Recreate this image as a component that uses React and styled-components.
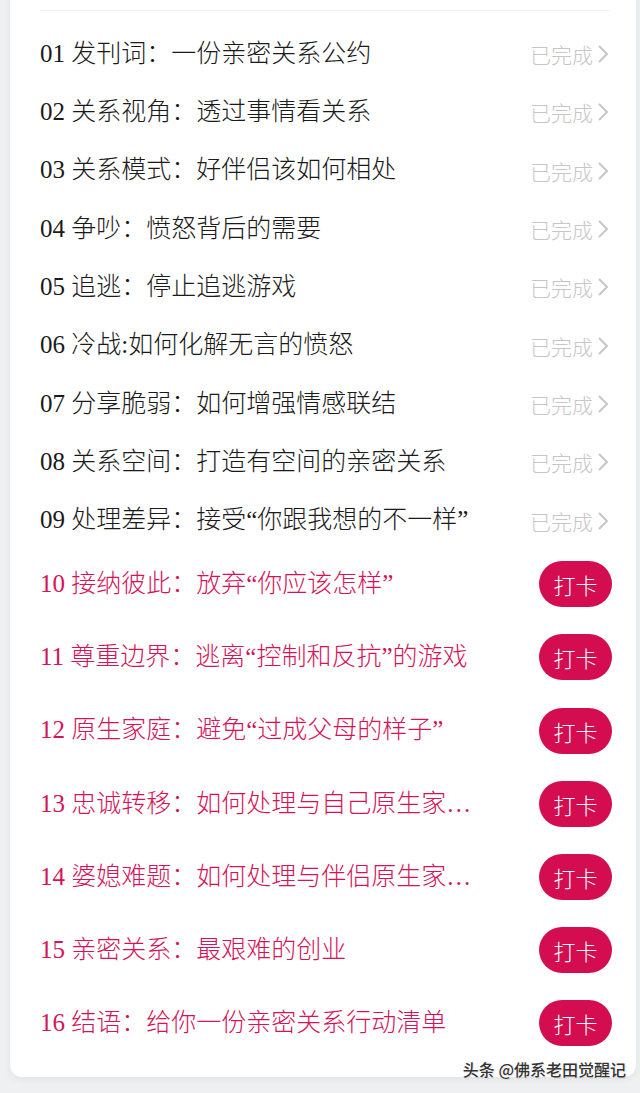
import React from "react";
import styled, { createGlobalStyle } from "styled-components";

const GlobalStyle = createGlobalStyle`
  html, body {
    margin: 0;
    padding: 0;
    background: #eff0f2;
  }
  body {
    font-family: "Liberation Serif", "Noto Sans CJK SC", serif;
  }
`;

const Page = styled.div`
  position: relative;
  width: 640px;
  height: 1093px;
  overflow: hidden;
  padding: 0 4px 0 10px;
  box-sizing: border-box;
`;

const Card = styled.div`
  background: #fff;
  border-radius: 0 0 12px 12px;
  box-shadow: 0 2px 8px rgba(0, 0, 0, 0.06);
  padding: 30px 24px 15px 30px;
  margin-top: -20px;
`;

const Divider = styled.div`
  height: 1px;
  background: #efefef;
  margin: 0 3px 14px 0;
`;

const List = styled.ul`
  list-style: none;
  margin: 0;
  padding: 0;
`;

const Row = styled.li`
  display: flex;
  align-items: center;
  box-sizing: border-box;
  height: ${(p) => (p.$done ? "58.3px" : "73.2px")};
  padding-bottom: ${(p) => (p.$done ? "0" : "4px")};
`;

const Title = styled.div`
  flex: 1;
  min-width: 0;
  max-width: 440px;
  font-size: 25px;
  font-weight: 300;
  color: ${(p) => (p.$done ? "#1a1a1a" : "#d4145a")};
  white-space: nowrap;
  overflow: hidden;
  text-overflow: ellipsis;
  line-height: 1.3;
`;

const Status = styled.div`
  margin-left: auto;
  display: flex;
  align-items: center;
  gap: 4px;
  font-family: "Noto Sans CJK SC", sans-serif;
  font-size: 21px;
  font-weight: 300;
  color: #c6c6c6;
  margin-right: 3px;
`;

const PunchButton = styled.button`
  margin-left: auto;
  width: 73px;
  height: 46px;
  border: none;
  border-radius: 23px;
  background: #d40d51;
  color: #fff;
  font-family: "Noto Sans CJK SC", sans-serif;
  font-size: 22px;
  font-weight: 300;
  padding: 0;
  cursor: pointer;
`;

const Watermark = styled.div`
  position: absolute;
  right: 14px;
  bottom: 12px;
  font-family: "Noto Sans CJK SC", sans-serif;
  font-size: 16px;
  font-weight: 500;
  color: #333;
  text-shadow: 0 0 2px #fff, 0 0 1px #fff, 1px 1px 1px rgba(0, 0, 0, 0.15);
`;

const Chevron = () => (
  <svg width="12" height="20" viewBox="0 0 12 20" fill="none">
    <path d="M2 2 L10 10 L2 18" stroke="#c6c6c6" strokeWidth="2" />
  </svg>
);

const lessons = [
  { no: "01", title: "发刊词：一份亲密关系公约", done: true },
  { no: "02", title: "关系视角：透过事情看关系", done: true },
  { no: "03", title: "关系模式：好伴侣该如何相处", done: true },
  { no: "04", title: "争吵：愤怒背后的需要", done: true },
  { no: "05", title: "追逃：停止追逃游戏", done: true },
  { no: "06", title: "冷战:如何化解无言的愤怒", done: true },
  { no: "07", title: "分享脆弱：如何增强情感联结", done: true },
  { no: "08", title: "关系空间：打造有空间的亲密关系", done: true },
  { no: "09", title: "处理差异：接受“你跟我想的不一样”", done: true },
  { no: "10", title: "接纳彼此：放弃“你应该怎样”" },
  { no: "11", title: "尊重边界：逃离“控制和反抗”的游戏" },
  { no: "12", title: "原生家庭：避免“过成父母的样子”" },
  { no: "13", title: "忠诚转移：如何处理与自己原生家庭的关系" },
  { no: "14", title: "婆媳难题：如何处理与伴侣原生家庭的关系" },
  { no: "15", title: "亲密关系：最艰难的创业" },
  { no: "16", title: "结语：给你一份亲密关系行动清单" },
];

export default function App() {
  return (
    <>
      <GlobalStyle />
      <Page>
        <Card>
          <Divider />
          <List>
            {lessons.map((l) => (
              <Row key={l.no} $done={l.done}>
                <Title $done={l.done}>
                  {l.no} {l.title}
                </Title>
                {l.done ? (
                  <Status>
                    已完成
                    <Chevron />
                  </Status>
                ) : (
                  <PunchButton>打卡</PunchButton>
                )}
              </Row>
            ))}
          </List>
        </Card>
        <Watermark>头条 @佛系老田觉醒记</Watermark>
      </Page>
    </>
  );
}
